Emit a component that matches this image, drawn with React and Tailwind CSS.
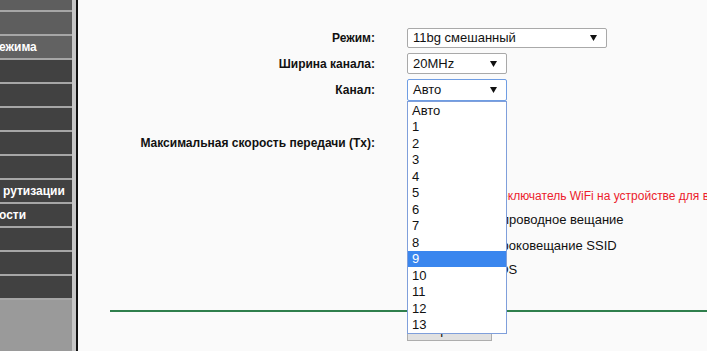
import React from "react";

const Arrow = () => (
  <svg width="7" height="6" viewBox="0 0 7 6" className="shrink-0">
    <polygon points="0,0 7,0 3.5,6" fill="#111" />
  </svg>
);

const Select = ({ w, h, text, focus, children }) => (
  <div className="relative">
    <div
      className={`flex items-center justify-between bg-white rounded-[2px] border pl-[5px] pr-[9px] ${
        focus ? "border-[#6f9de3]" : "border-[#a9a9a9]"
      } ${w} ${h}`}
    >
      <span className="text-[13px] text-[#111]">{text}</span>
      <Arrow />
    </div>
    {children}
  </div>
);

const menu = [
  { h: "h-[10px]", c: "bg-[#5e5e5e]", t: "" },
  { h: "h-[22px]", c: "bg-[#5e5e5e]", t: "" },
  { h: "h-[22px]", c: "bg-[#626262]", t: "ежима", ml: "ml-[-1px]" },
  { h: "h-[22px]", c: "bg-[#414141]", t: "" },
  { h: "h-[22px]", c: "bg-[#414141]", t: "" },
  { h: "h-[22px]", c: "bg-[#414141]", t: "" },
  { h: "h-[22px]", c: "bg-[#414141]", t: "" },
  { h: "h-[22px]", c: "bg-[#414141]", t: "" },
  { h: "h-[22px]", c: "bg-[#414141]", t: "рутизации", ml: "ml-[3px]" },
  { h: "h-[22px]", c: "bg-[#414141]", t: "ости", ml: "ml-[-1px]" },
  { h: "h-[22px]", c: "bg-[#414141]", t: "" },
  { h: "h-[22px]", c: "bg-[#414141]", t: "" },
  { h: "h-[22px]", c: "bg-[#414141]", t: "" },
];

const options = ["Авто", "1", "2", "3", "4", "5", "6", "7", "8", "9", "10", "11", "12", "13"];

const Checkbox = () => (
  <div className="w-[13px] h-[13px] border border-[#767676] rounded-[2px] bg-white shrink-0" />
);

export default function App() {
  return (
    <div
      className="flex w-[707px] h-[351px] overflow-hidden bg-[#fafafa]"
      style={{ fontFamily: '"Liberation Sans", Arial, sans-serif' }}
    >
      {/* sidebar */}
      <div className="w-[72px] shrink-0 flex flex-col gap-[2px] bg-[#a6a6a6] overflow-hidden">
        {menu.map((m, i) => (
          <div
            key={i}
            className={`${m.h} ${m.c} shrink-0 flex items-center whitespace-nowrap text-white font-bold text-[12px]`}
          >
            {m.t && <span className={m.ml}>{m.t}</span>}
          </div>
        ))}
        <div className="flex-1 bg-[#9a9a9a]" />
      </div>
      <div className="w-[4px] shrink-0 bg-[#c6c6c6]" />
      <div className="w-[2px] shrink-0 bg-[#111]" />

      {/* main */}
      <div className="flex-1 flex flex-col pt-[28px] text-[#111] overflow-hidden">
        <div className="flex items-center h-[20px]">
          <div className="w-[297px] shrink-0 text-right font-bold text-[12px]">Режим:</div>
          <div className="ml-[32px]">
            <Select w="w-[200px]" h="h-[20px]" text="11bg смешанный" />
          </div>
        </div>
        <div className="flex items-center h-[21px] mt-[5px]">
          <div className="w-[297px] shrink-0 text-right font-bold text-[12px]">Ширина канала:</div>
          <div className="ml-[32px]">
            <Select w="w-[100px]" h="h-[21px]" text="20MHz" />
          </div>
        </div>
        <div className="flex items-center h-[22px] mt-[5px] relative z-10">
          <div className="w-[297px] shrink-0 text-right font-bold text-[12px]">Канал:</div>
          <div className="ml-[32px]">
            <Select w="w-[100px]" h="h-[22px]" text="Авто" focus>
              <div className="absolute left-0 top-full w-[100px] bg-white border border-[#7f9fdb] flex flex-col">
                {options.map((o) => (
                  <div
                    key={o}
                    className={`h-[16.5px] flex items-center pl-[4px] text-[13px] ${
                      o === "9" ? "bg-[#3a86ee] text-white" : "text-[#111]"
                    }`}
                  >
                    {o}
                  </div>
                ))}
              </div>
            </Select>
          </div>
        </div>

        <div className="flex items-center h-[22px] mt-[31px]">
          <div className="w-[297px] shrink-0 text-right font-bold text-[12px]">
            Максимальная скорость передачи (Tx):
          </div>
          <div className="ml-[32px]">
            <Select w="w-[100px]" h="h-[21px]" text="54Mbps" />
          </div>
        </div>

        <div className="flex items-center h-[20px] mt-[32px]">
          <div className="w-[297px] shrink-0" />
          <div className="ml-[32px] whitespace-nowrap text-[12px] text-[#ec1c2c]">
            Используйте переключатель WiFi на устройстве для включения/выключения беспроводного вещания.
          </div>
        </div>

        <div className="flex items-center h-[20px] mt-[4px]">
          <div className="w-[297px] shrink-0" />
          <div className="ml-[32px] flex items-center whitespace-nowrap text-[13px]">
            <Checkbox />
            <span className="ml-[-1px]">Включить беспроводное вещание</span>
          </div>
        </div>
        <div className="flex items-center h-[20px] mt-[6px]">
          <div className="w-[297px] shrink-0" />
          <div className="ml-[32px] flex items-center whitespace-nowrap text-[13px]">
            <Checkbox />
            <span className="ml-[2px]">Включить широковещание SSID</span>
          </div>
        </div>
        <div className="flex items-center h-[20px] mt-[4px]">
          <div className="w-[297px] shrink-0" />
          <div className="ml-[32px] flex items-center gap-[5px] whitespace-nowrap text-[13px]">
            <Checkbox />
            <span>Включить WDS</span>
          </div>
        </div>

        <div className="ml-[32px] mt-[30px] h-[2px] bg-[#2f7f4c]" />

        <div className="flex mt-[7px]">
          <div className="w-[297px] shrink-0" />
          <div className="ml-[32px] w-[85px] h-[22px] bg-[#e1e1e1] border border-[#adadad] flex items-center justify-center text-[13px]">
            Сохранить
          </div>
        </div>
      </div>
    </div>
  );
}
